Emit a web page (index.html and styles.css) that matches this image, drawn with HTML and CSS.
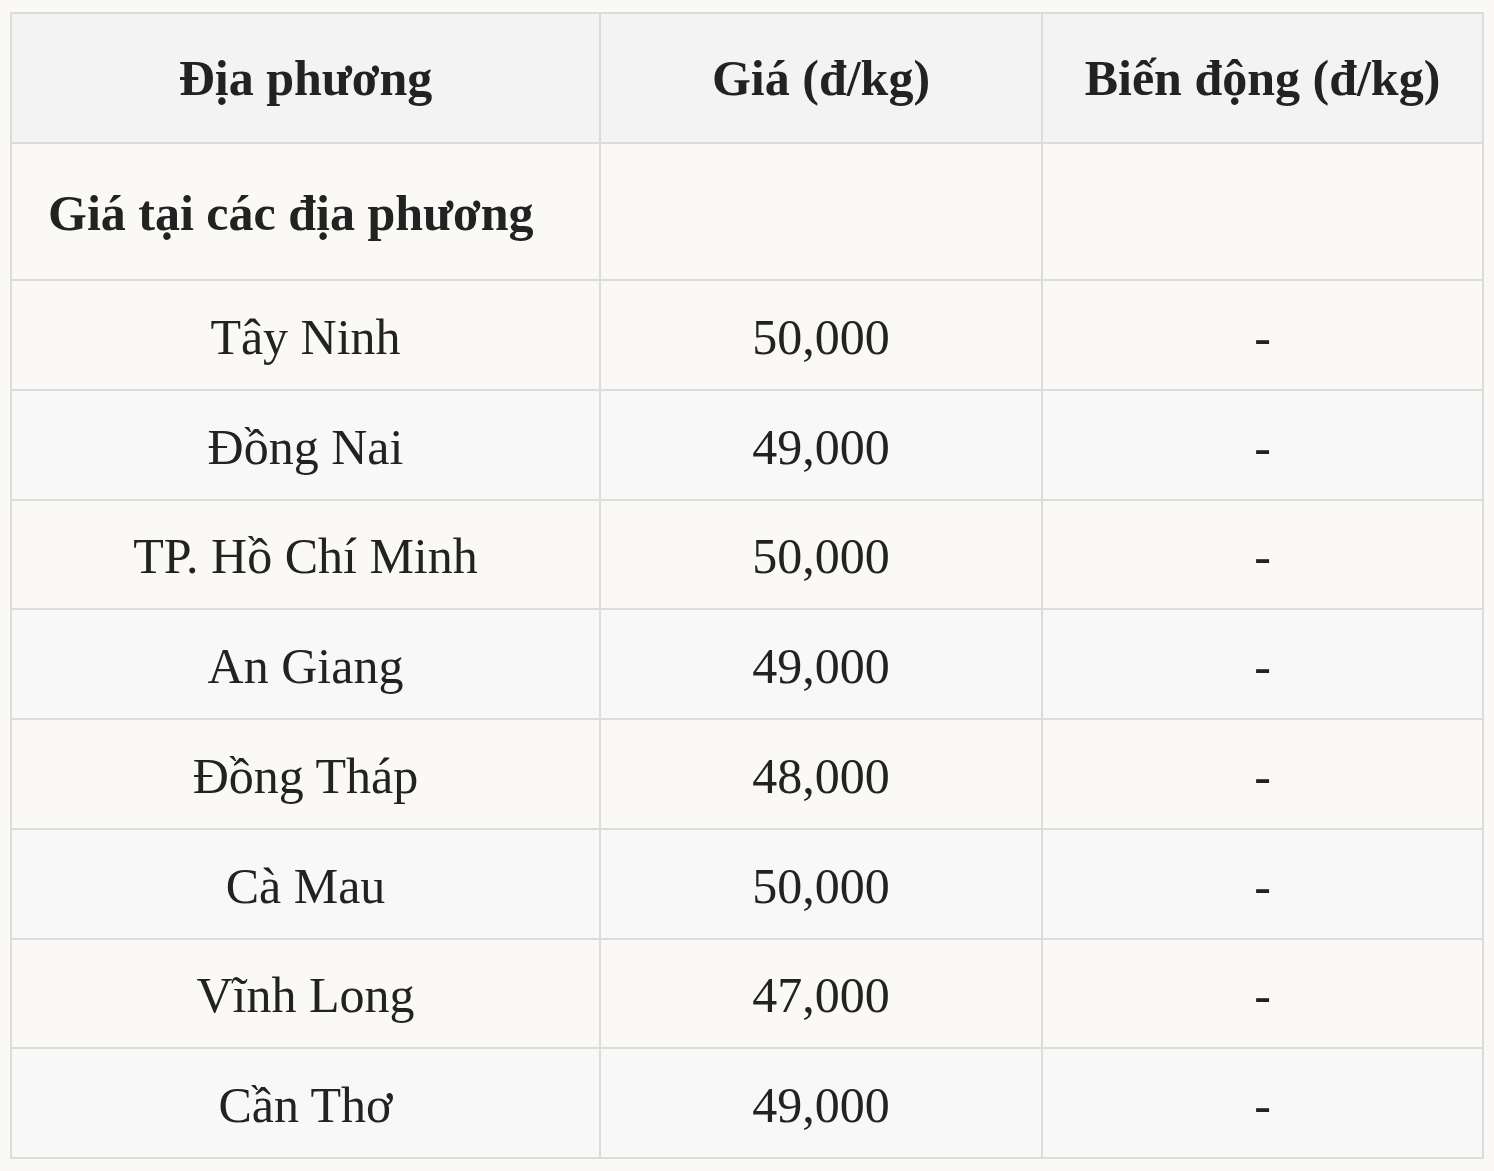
FILE: index.html
```html
<!DOCTYPE html>
<html lang="vi">
<head>
<meta charset="utf-8">
<link rel="stylesheet" href="styles.css">
</head>
<body>
<table class="price-table">
  <colgroup>
    <col class="c1"><col class="c2"><col class="c3">
  </colgroup>
  <thead>
    <tr class="head-row">
      <th>Địa phương</th>
      <th>Giá (đ/kg)</th>
      <th>Biến động (đ/kg)</th>
    </tr>
  </thead>
  <tbody>
    <tr class="section-row">
      <td class="section">Giá tại các địa phương</td>
      <td></td>
      <td></td>
    </tr>
    <tr class="row"><td>Tây Ninh</td><td>50,000</td><td>-</td></tr>
    <tr class="row"><td>Đồng Nai</td><td>49,000</td><td>-</td></tr>
    <tr class="row"><td>TP. Hồ Chí Minh</td><td>50,000</td><td>-</td></tr>
    <tr class="row"><td>An Giang</td><td>49,000</td><td>-</td></tr>
    <tr class="row"><td>Đồng Tháp</td><td>48,000</td><td>-</td></tr>
    <tr class="row"><td>Cà Mau</td><td>50,000</td><td>-</td></tr>
    <tr class="row"><td>Vĩnh Long</td><td>47,000</td><td>-</td></tr>
    <tr class="row"><td>Cần Thơ</td><td>49,000</td><td>-</td></tr>
  </tbody>
</table>
</body>
</html>
```
FILE: styles.css
```css
html, body {
  margin: 0;
  background: #faf9f6;
}
body {
  padding: 12px 10px 0 10px;
  font-family: "Liberation Serif", "Times New Roman", serif;
  color: #222222;
}
.price-table {
  width: 1472px;
  border-collapse: collapse;
  table-layout: fixed;
  border: 2px solid #dcdcdc;
}
.c1 { width: 589px; }
.c2 { width: 442px; }
.c3 { width: 441px; }
.price-table th,
.price-table td {
  border: 2px solid #dcdcdc;
  text-align: center;
  vertical-align: middle;
  padding: 0;
  font-size: 50px;
  line-height: 1;
}
.head-row th {
  background: #f3f3f3;
  height: 128px;
  font-weight: 700;
  color: #222222;
}
.section-row td {
  background: #faf9f6;
  height: 133px;
  padding-top: 2px;
}
.section-row td.section {
  text-align: left;
  padding-left: 36px;
  font-weight: 700;
}
.row td {
  height: 103.75px;
  font-weight: 400;
  padding-top: 4px;
}
.row:nth-child(even) td { background: #faf9f6; }
.row:nth-child(odd) td { background: #f8f8f8; }
```
